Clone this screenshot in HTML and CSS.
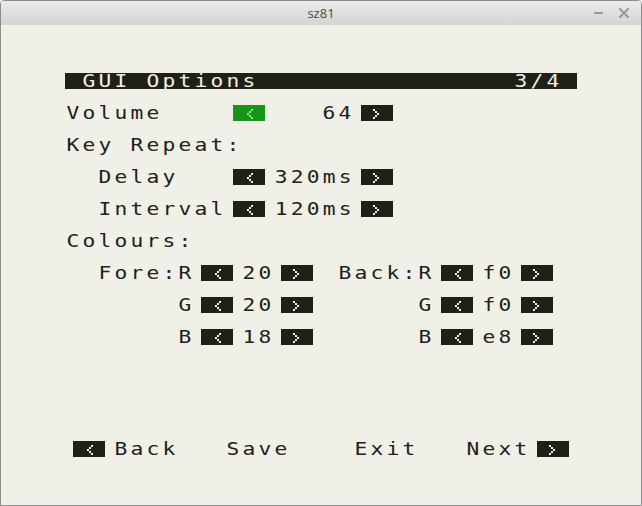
FILE: index.html
```html
<!DOCTYPE html>
<html lang="en">
<head>
<meta charset="utf-8">
<title>sz81</title>
<link rel="stylesheet" href="styles.css">
</head>
<body>
<div class="window">
  <header class="titlebar">
    <span></span>
    <span class="title">sz81</span>
    <div class="controls">
      <svg class="ctl" width="10" height="10" viewBox="0 0 10 10"><rect x="0" y="4" width="9" height="2" fill="#9a9a9a"/></svg>
      <svg class="ctl" width="10" height="10" viewBox="0 0 10 10"><path d="M1 1L9 9M9 1L1 9" stroke="#9a9a9a" stroke-width="2.2" stroke-linecap="square"/></svg>
    </div>
  </header>
  <main class="content">
    <div class="screen">
      <div class="bar"><span class="llab">GUI Options</span><span class="rtext">3/4</span></div>

      <div class="row">
        <span class="llab w168">Volume</span>
        <span class="btn sel"><svg width="16" height="16" viewBox="0 0 8 8" shape-rendering="crispEdges"><path d="M5 2h1v1H5zM4 3h1v1H4zM3 4h1v1H3zM4 5h1v1H4zM5 6h1v1H5z"/></svg></span>
        <span class="val w96">64</span>
        <span class="btn"><svg width="16" height="16" viewBox="0 0 8 8" shape-rendering="crispEdges"><path d="M2 2h1v1H2zM3 3h1v1H3zM4 4h1v1H4zM3 5h1v1H3zM2 6h1v1H2z"/></svg></span>
      </div>

      <div class="row"><span class="llab">Key Repeat:</span></div>

      <div class="row">
        <span class="ind"></span>
        <span class="llab w136">Delay</span>
        <span class="btn"><svg width="16" height="16" viewBox="0 0 8 8" shape-rendering="crispEdges"><path d="M5 2h1v1H5zM4 3h1v1H4zM3 4h1v1H3zM4 5h1v1H4zM5 6h1v1H5z"/></svg></span>
        <span class="val w96">320ms</span>
        <span class="btn"><svg width="16" height="16" viewBox="0 0 8 8" shape-rendering="crispEdges"><path d="M2 2h1v1H2zM3 3h1v1H3zM4 4h1v1H4zM3 5h1v1H3zM2 6h1v1H2z"/></svg></span>
      </div>

      <div class="row">
        <span class="ind"></span>
        <span class="llab w136">Interval</span>
        <span class="btn"><svg width="16" height="16" viewBox="0 0 8 8" shape-rendering="crispEdges"><path d="M5 2h1v1H5zM4 3h1v1H4zM3 4h1v1H3zM4 5h1v1H4zM5 6h1v1H5z"/></svg></span>
        <span class="val w96">120ms</span>
        <span class="btn"><svg width="16" height="16" viewBox="0 0 8 8" shape-rendering="crispEdges"><path d="M2 2h1v1H2zM3 3h1v1H3zM4 4h1v1H4zM3 5h1v1H3zM2 6h1v1H2z"/></svg></span>
      </div>

      <div class="row"><span class="llab">Colours:</span></div>

      <div class="row">
        <span class="rlab w136">Fore:R</span>
        <span class="btn"><svg width="16" height="16" viewBox="0 0 8 8" shape-rendering="crispEdges"><path d="M5 2h1v1H5zM4 3h1v1H4zM3 4h1v1H3zM4 5h1v1H4zM5 6h1v1H5z"/></svg></span>
        <span class="val w48">20</span>
        <span class="btn"><svg width="16" height="16" viewBox="0 0 8 8" shape-rendering="crispEdges"><path d="M2 2h1v1H2zM3 3h1v1H3zM4 4h1v1H4zM3 5h1v1H3zM2 6h1v1H2z"/></svg></span>
        <span class="rlab w128">Back:R</span>
        <span class="btn"><svg width="16" height="16" viewBox="0 0 8 8" shape-rendering="crispEdges"><path d="M5 2h1v1H5zM4 3h1v1H4zM3 4h1v1H3zM4 5h1v1H4zM5 6h1v1H5z"/></svg></span>
        <span class="val w48">f0</span>
        <span class="btn"><svg width="16" height="16" viewBox="0 0 8 8" shape-rendering="crispEdges"><path d="M2 2h1v1H2zM3 3h1v1H3zM4 4h1v1H4zM3 5h1v1H3zM2 6h1v1H2z"/></svg></span>
      </div>

      <div class="row">
        <span class="rlab w136">G</span>
        <span class="btn"><svg width="16" height="16" viewBox="0 0 8 8" shape-rendering="crispEdges"><path d="M5 2h1v1H5zM4 3h1v1H4zM3 4h1v1H3zM4 5h1v1H4zM5 6h1v1H5z"/></svg></span>
        <span class="val w48">20</span>
        <span class="btn"><svg width="16" height="16" viewBox="0 0 8 8" shape-rendering="crispEdges"><path d="M2 2h1v1H2zM3 3h1v1H3zM4 4h1v1H4zM3 5h1v1H3zM2 6h1v1H2z"/></svg></span>
        <span class="rlab w128">G</span>
        <span class="btn"><svg width="16" height="16" viewBox="0 0 8 8" shape-rendering="crispEdges"><path d="M5 2h1v1H5zM4 3h1v1H4zM3 4h1v1H3zM4 5h1v1H4zM5 6h1v1H5z"/></svg></span>
        <span class="val w48">f0</span>
        <span class="btn"><svg width="16" height="16" viewBox="0 0 8 8" shape-rendering="crispEdges"><path d="M2 2h1v1H2zM3 3h1v1H3zM4 4h1v1H4zM3 5h1v1H3zM2 6h1v1H2z"/></svg></span>
      </div>

      <div class="row">
        <span class="rlab w136">B</span>
        <span class="btn"><svg width="16" height="16" viewBox="0 0 8 8" shape-rendering="crispEdges"><path d="M5 2h1v1H5zM4 3h1v1H4zM3 4h1v1H3zM4 5h1v1H4zM5 6h1v1H5z"/></svg></span>
        <span class="val w48">18</span>
        <span class="btn"><svg width="16" height="16" viewBox="0 0 8 8" shape-rendering="crispEdges"><path d="M2 2h1v1H2zM3 3h1v1H3zM4 4h1v1H4zM3 5h1v1H3zM2 6h1v1H2z"/></svg></span>
        <span class="rlab w128">B</span>
        <span class="btn"><svg width="16" height="16" viewBox="0 0 8 8" shape-rendering="crispEdges"><path d="M5 2h1v1H5zM4 3h1v1H4zM3 4h1v1H3zM4 5h1v1H4zM5 6h1v1H5z"/></svg></span>
        <span class="val w48">e8</span>
        <span class="btn"><svg width="16" height="16" viewBox="0 0 8 8" shape-rendering="crispEdges"><path d="M2 2h1v1H2zM3 3h1v1H3zM4 4h1v1H4zM3 5h1v1H3zM2 6h1v1H2z"/></svg></span>
      </div>

      <div class="footer">
        <div class="fitem first">
          <span class="btn"><svg width="16" height="16" viewBox="0 0 8 8" shape-rendering="crispEdges"><path d="M5 2h1v1H5zM4 3h1v1H4zM3 4h1v1H3zM4 5h1v1H4zM5 6h1v1H5z"/></svg></span>
          <span class="llab">Back</span>
        </div>
        <div class="fitem"><span class="llab">Save</span></div>
        <div class="fitem"><span class="llab">Exit</span></div>
        <div class="fitem">
          <span class="llab w64">Next</span>
          <span class="btn"><svg width="16" height="16" viewBox="0 0 8 8" shape-rendering="crispEdges"><path d="M2 2h1v1H2zM3 3h1v1H3zM4 4h1v1H4zM3 5h1v1H3zM2 6h1v1H2z"/></svg></span>
        </div>
      </div>
    </div>
  </main>
</div>
</body>
</html>
```
FILE: styles.css
```css
* { box-sizing: border-box; }

html, body {
  margin: 0;
  padding: 0;
  background: #ffffff;
}

.window {
  width: 642px;
  height: 506px;
  border: 1px solid #8d8d8d;
  border-radius: 4px 4px 0 0;
  display: flex;
  flex-direction: column;
  overflow: hidden;
}

.titlebar {
  height: 24px;
  flex: none;
  background: linear-gradient(#ebebeb, #d4d4d4);
  display: grid;
  grid-template-columns: 1fr auto 1fr;
  align-items: center;
  font-family: "Open Sans", "Noto Sans", sans-serif;
  font-size: 13px;
  color: #4a4a4a;
}

.title {
  line-height: 24px;
}

.controls {
  justify-self: end;
  display: flex;
  align-items: center;
  gap: 15px;
  padding-right: 12px;
}

.ctl {
  display: block;
}

.content {
  flex: 1;
  background: #f0f0e8;
}

/* ZX81-style 32x24 character screen, 16px cells */
.screen {
  width: 512px;
  height: 384px;
  margin: 48px auto 0;
  display: flex;
  flex-direction: column;
  gap: 16px;
  font-family: "DejaVu Sans Mono", monospace;
  font-size: 17px;
  line-height: 16px;
  color: #202018;
  letter-spacing: calc(12.8px - 1ch);
  white-space: pre;
}

.bar {
  height: 16px;
  background: #202018;
  color: #f0f0e8;
  display: flex;
  justify-content: space-between;
  padding: 0 14.4px 0 16px;
}

.row {
  height: 16px;
  display: flex;
  align-items: center;
}

/* glyphs widened to the blocky 8x8 character look */
.llab {
  flex: none;
  padding-left: 1.3px;
  transform-origin: left center;
  transform: scaleX(1.25);
}

.rtext {
  flex: none;
  transform-origin: right center;
  transform: scaleX(1.25);
}

.rlab,
.val {
  flex: none;
  text-align: right;
  padding-right: 5.1px;
  transform-origin: right center;
  transform: scaleX(1.25);
}

.ind { flex: none; width: 32px; }

.w168 { width: 168px; }
.w136 { width: 136px; }
.w128 { width: 128px; }
.w96 { width: 96px; }
.w64 { width: 64px; }
.w48 { width: 48px; }

.btn {
  flex: none;
  width: 32px;
  height: 16px;
  background: #202018;
  display: flex;
  justify-content: center;
  align-items: center;
  fill: #f0f0e8;
}

.btn svg {
  display: block;
}

.btn.sel {
  background: #169416;
  fill: #84ee84;
}

.footer {
  margin-top: auto;
  height: 16px;
  display: grid;
  grid-template-columns: 160px 128px 112px 112px;
}

.fitem {
  display: flex;
  align-items: center;
  gap: 8px;
}

.fitem.first {
  padding-left: 8px;
}
```
